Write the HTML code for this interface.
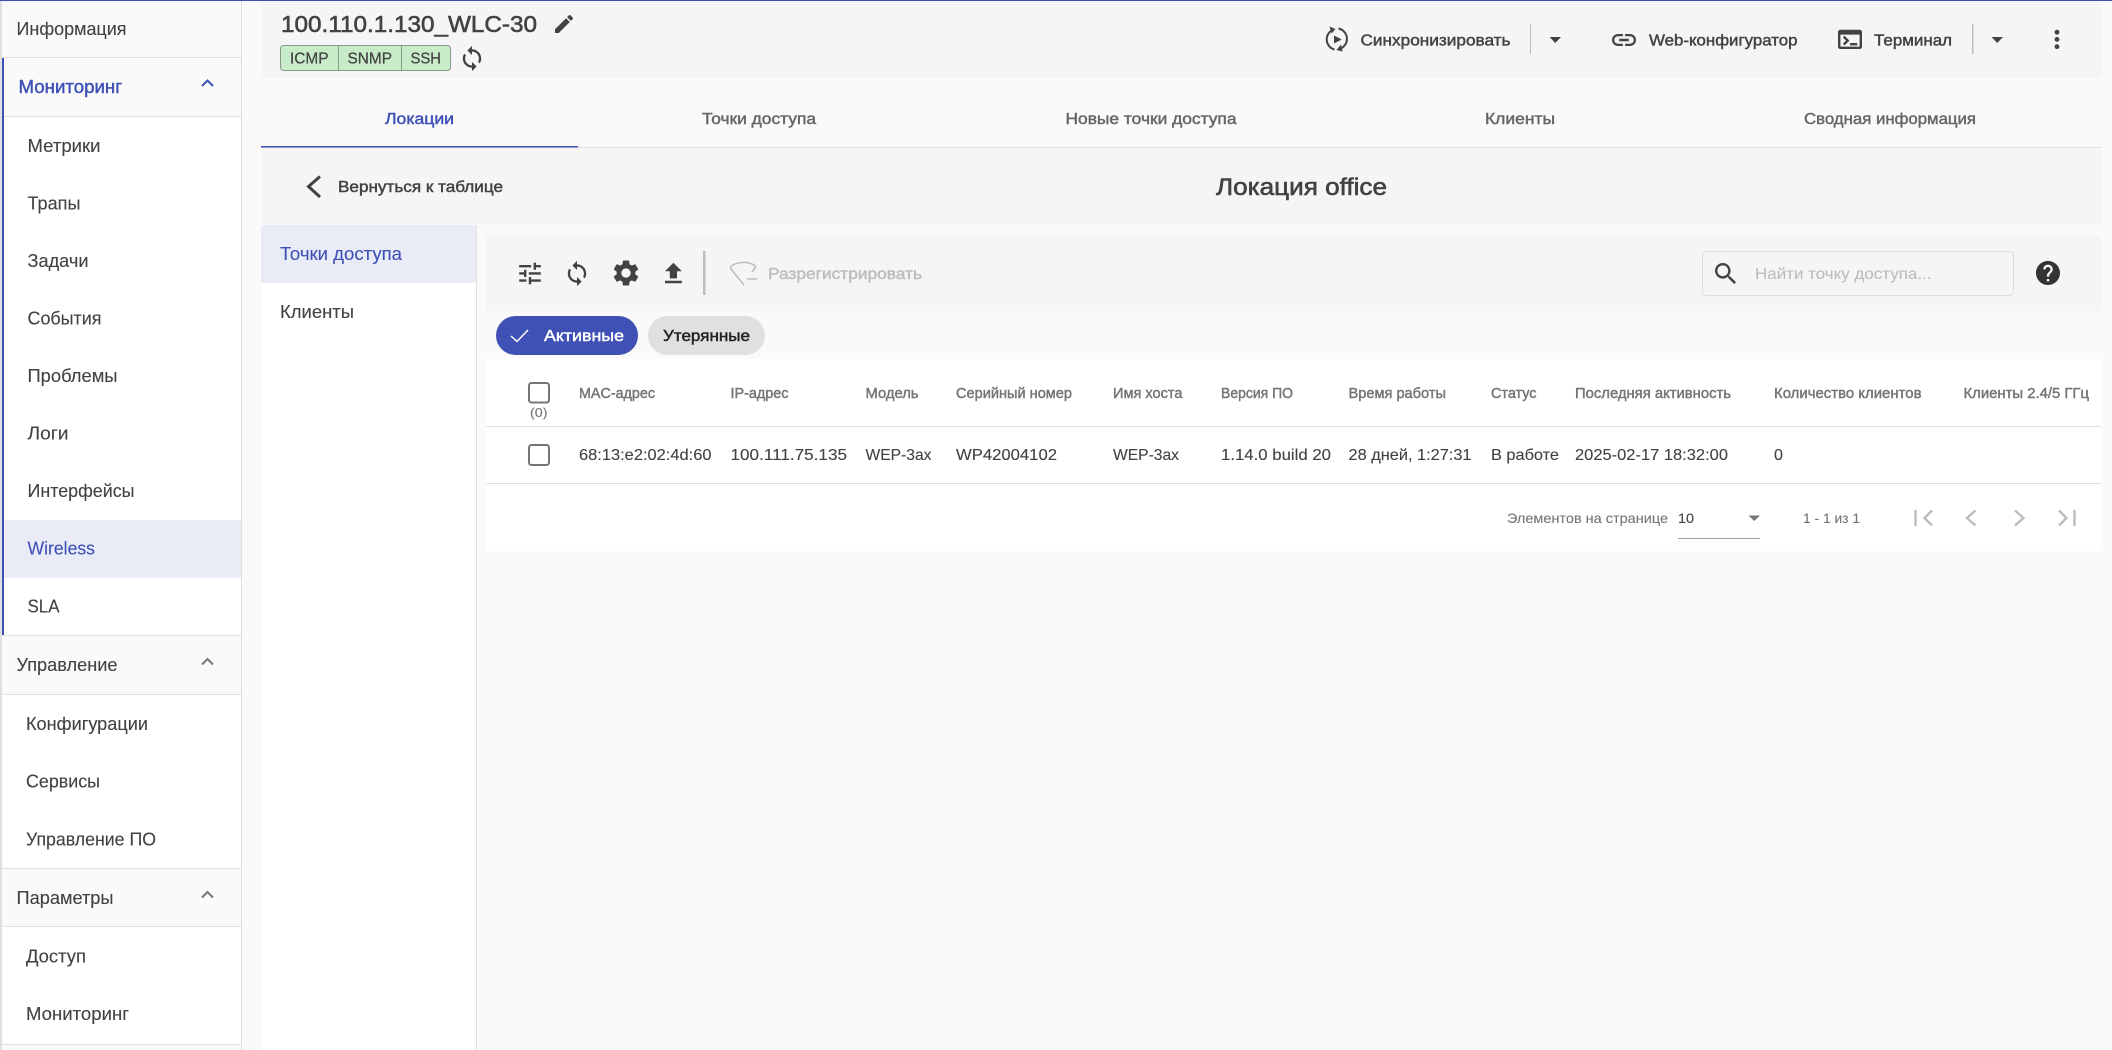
<!DOCTYPE html>
<html lang="ru"><head><meta charset="utf-8"><title>Локация office</title>
<style>
html,body{margin:0;padding:0;width:2112px;height:1050px;overflow:hidden;background:#fafafa}
svg{display:block}
text{font-family:"Liberation Sans",sans-serif;fill:currentColor;stroke:currentColor;stroke-width:.12;color:#424242;white-space:pre}
.m{stroke-width:.45}
.b{color:#3f51b5}.g{color:#757575}.l{color:#bdbdbd}.t{color:#666}
</style></head><body>
<svg xmlns="http://www.w3.org/2000/svg" width="2112" height="1050" viewBox="0 0 2112 1050">
<rect width="2112" height="1050" fill="#fafafa"/>
<rect width="2112" height="1" fill="#3f51b5"/>

<!-- sidebar -->
<rect x="0" y="1" width="2" height="1049" fill="#e0e0e0"/>
<rect x="2" y="1" width="239" height="1049" fill="#fff"/>
<rect x="241" y="1" width="1" height="1049" fill="#e0e0e0"/>
<rect x="2" y="1" width="239" height="56" fill="#fafafa"/>
<rect x="2" y="58" width="239" height="58" fill="#fafafa"/>
<rect x="2" y="636" width="239" height="58" fill="#fafafa"/>
<rect x="2" y="869" width="239" height="57" fill="#fafafa"/>
<rect x="2" y="1045" width="239" height="5" fill="#fafafa"/>
<rect x="4" y="520" width="237" height="58" fill="#e9ecf6"/>
<g fill="#e0e0e0">
<rect x="2" y="57" width="239" height="1"/><rect x="2" y="116" width="239" height="1"/>
<rect x="2" y="635" width="239" height="1"/><rect x="2" y="694" width="239" height="1"/>
<rect x="2" y="868" width="239" height="1"/><rect x="2" y="926" width="239" height="1"/>
<rect x="2" y="1044" width="239" height="1"/>
</g>
<rect x="2" y="58" width="2" height="577" fill="#3f51b5"/>
<text x="16.5" y="35" font-size="18" textLength="110" lengthAdjust="spacingAndGlyphs">Информация</text>
<text class="m b" x="18.5" y="93" font-size="18" textLength="103.5" lengthAdjust="spacingAndGlyphs">Мониторинг</text>
<polyline points="202,86 207.5,80.5 213,86" fill="none" stroke="#3f51b5" stroke-width="2"/>
<text x="27.5" y="152" font-size="18" textLength="73" lengthAdjust="spacingAndGlyphs">Метрики</text>
<text x="27.5" y="209.5" font-size="18" textLength="53" lengthAdjust="spacingAndGlyphs">Трапы</text>
<text x="27.5" y="267" font-size="18" textLength="61" lengthAdjust="spacingAndGlyphs">Задачи</text>
<text x="27.5" y="324.5" font-size="18" textLength="74" lengthAdjust="spacingAndGlyphs">События</text>
<text x="27.5" y="382" font-size="18" textLength="90" lengthAdjust="spacingAndGlyphs">Проблемы</text>
<text x="27.5" y="439.5" font-size="18" textLength="41" lengthAdjust="spacingAndGlyphs">Логи</text>
<text x="27.5" y="497" font-size="18" textLength="107" lengthAdjust="spacingAndGlyphs">Интерфейсы</text>
<text class="b" x="27.5" y="554.5" font-size="18" textLength="67.5" lengthAdjust="spacingAndGlyphs">Wireless</text>
<text x="27.5" y="612.5" font-size="18" textLength="32" lengthAdjust="spacingAndGlyphs">SLA</text>
<text x="16.5" y="671" font-size="18" textLength="101" lengthAdjust="spacingAndGlyphs">Управление</text>
<polyline points="202,664.5 207.5,659 213,664.5" fill="none" stroke="#757575" stroke-width="2"/>
<text x="26" y="730" font-size="18" textLength="122" lengthAdjust="spacingAndGlyphs">Конфигурации</text>
<text x="26" y="787.5" font-size="18" textLength="74" lengthAdjust="spacingAndGlyphs">Сервисы</text>
<text x="26" y="845.5" font-size="18" textLength="130" lengthAdjust="spacingAndGlyphs">Управление ПО</text>
<text x="16.5" y="904" font-size="18" textLength="97" lengthAdjust="spacingAndGlyphs">Параметры</text>
<polyline points="202,897.5 207.5,892 213,897.5" fill="none" stroke="#757575" stroke-width="2"/>
<text x="26" y="962.5" font-size="18" textLength="60" lengthAdjust="spacingAndGlyphs">Доступ</text>
<text x="26" y="1020" font-size="18" textLength="103" lengthAdjust="spacingAndGlyphs">Мониторинг</text>

<!-- header -->
<rect x="261" y="1" width="1840" height="77" fill="#f5f5f5"/>
<text class="m" style="stroke-width:.6" x="281" y="32" font-size="23.5" textLength="256" lengthAdjust="spacingAndGlyphs">100.110.1.130_WLC-30</text>
<path transform="translate(552 12)" fill="#424242" d="M3 17.25V21h3.75L17.81 9.94l-3.75-3.75L3 17.25zM20.71 7.04c.39-.39.39-1.02 0-1.41l-2.34-2.34c-.39-.39-1.02-.39-1.41 0l-1.83 1.83 3.75 3.75 1.83-1.83z"/>
<rect x="280.5" y="45.5" width="170" height="25" rx="3" fill="#c8ebc8" stroke="#8a9a8a"/>
<rect x="338" y="46" width="1" height="24" fill="#8a9a8a"/><rect x="401" y="46" width="1" height="24" fill="#8a9a8a"/>
<text style="stroke-width:.25" x="290" y="63.5" font-size="16" textLength="38.5" lengthAdjust="spacingAndGlyphs">ICMP</text>
<text style="stroke-width:.25" x="347.5" y="63.5" font-size="16" textLength="44.5" lengthAdjust="spacingAndGlyphs">SNMP</text>
<text style="stroke-width:.25" x="410.5" y="63.5" font-size="16" textLength="30.5" lengthAdjust="spacingAndGlyphs">SSH</text>
<path transform="translate(458.2 44.7) scale(1.15)" fill="#424242" d="M12 4V1L8 5l4 4V6c3.31 0 6 2.69 6 6 0 1.01-.25 1.97-.7 2.8l1.46 1.46C19.54 15.03 20 13.57 20 12c0-4.42-3.58-8-8-8zm0 14c-3.31 0-6-2.69-6-6 0-1.01.25-1.97.7-2.8L5.24 7.74C4.46 8.97 4 10.43 4 12c0 4.42 3.58 8 8 8v3l4-4-4-4v3z"/>

<!-- sync play -->
<path d="M1333.5 29.5A10.6 10.6 0 0 0 1334.5 49.6M1338.5 28.5A10.6 10.6 0 0 1 1339.5 49" fill="none" stroke="#424242" stroke-width="2"/>
<path d="M1329.5 26.5L1335.5 29L1331.5 33.5ZM1342.5 51.5L1336.5 50L1341 44.5Z" fill="#424242"/>
<path d="M1334 35.5V43.5L1341.7 39.5Z" fill="#424242"/>
<text class="m" x="1360.5" y="45.5" font-size="16" textLength="150" lengthAdjust="spacingAndGlyphs">Синхронизировать</text>
<rect x="1530" y="24" width="1" height="30" fill="#bdbdbd"/>
<path d="M1549.5 37H1561L1555.25 43Z" fill="#424242"/>
<path transform="translate(1609.6 25.6) scale(1.2)" fill="#424242" d="M3.9 12c0-1.71 1.39-3.1 3.1-3.1h4V7H7c-2.76 0-5 2.24-5 5s2.24 5 5 5h4v-1.9H7c-1.71 0-3.1-1.39-3.1-3.1zM8 13h8v-2H8v2zm9-6h-4v1.9h4c1.71 0 3.1 1.39 3.1 3.1s-1.39 3.1-3.1 3.1h-4V17h4c2.76 0 5-2.24 5-5s-2.24-5-5-5z"/>
<text class="m" x="1649" y="45.5" font-size="16" textLength="148.5" lengthAdjust="spacingAndGlyphs">Web-конфигуратор</text>
<path transform="translate(1835.6 25) scale(1.2)" fill="#424242" d="M20 4H4c-1.11 0-2 .9-2 2v12c0 1.1.89 2 2 2h16c1.1 0 2-.9 2-2V6c0-1.1-.89-2-2-2zm0 14H4V8h16v10zm-2-1h-6v-2h6v2zM7.5 17l-1.41-1.41L8.67 13l-2.59-2.59L7.5 9l4 4-4 4z"/>
<text class="m" x="1874" y="45.5" font-size="16" textLength="78" lengthAdjust="spacingAndGlyphs">Терминал</text>
<rect x="1972" y="24" width="1.5" height="30" fill="#bdbdbd"/>
<path d="M1991.5 37H2003L1997.25 43Z" fill="#424242"/>
<path transform="translate(2042.6 25) scale(1.2)" fill="#424242" d="M12 8c1.1 0 2-.9 2-2s-.9-2-2-2-2 .9-2 2 .9 2 2 2zm0 2c-1.1 0-2 .9-2 2s.9 2 2 2 2-.9 2-2-.9-2-2-2zm0 6c-1.1 0-2 .9-2 2s.9 2 2 2 2-.9 2-2-.9-2-2-2z"/>

<!-- tabs -->
<rect x="261" y="147" width="1840" height="1" fill="#e0e0e0"/>
<rect x="261" y="146" width="317" height="1.5" fill="#3f51b5"/>
<text class="m b" x="385" y="124" font-size="16" textLength="69" lengthAdjust="spacingAndGlyphs">Локации</text>
<text class="m t" x="702" y="124" font-size="16" textLength="114" lengthAdjust="spacingAndGlyphs">Точки доступа</text>
<text class="m t" x="1065.5" y="124" font-size="16" textLength="171" lengthAdjust="spacingAndGlyphs">Новые точки доступа</text>
<text class="m t" x="1485" y="124" font-size="16" textLength="70" lengthAdjust="spacingAndGlyphs">Клиенты</text>
<text class="m t" x="1804" y="124" font-size="16" textLength="172" lengthAdjust="spacingAndGlyphs">Сводная информация</text>

<!-- sub header -->
<rect x="261" y="148" width="1840" height="76" fill="#f5f5f5"/>
<polyline points="320,176.5 308.5,186.5 320,197" fill="none" stroke="#424242" stroke-width="3"/>
<text class="m" x="338" y="192" font-size="16" textLength="165" lengthAdjust="spacingAndGlyphs">Вернуться к таблице</text>
<text class="m" style="stroke-width:.6" x="1216" y="195" font-size="24" textLength="171" lengthAdjust="spacingAndGlyphs">Локация office</text>

<!-- left tabs -->
<rect x="261" y="225" width="215" height="825" fill="#fff"/>
<rect x="476" y="225" width="1" height="825" fill="#e0e0e0"/>
<rect x="261" y="225" width="215" height="58" fill="#e9ecf6"/>
<text class="b" x="280" y="260" font-size="18" textLength="122" lengthAdjust="spacingAndGlyphs">Точки доступа</text>
<text x="280" y="318" font-size="18" textLength="74" lengthAdjust="spacingAndGlyphs">Клиенты</text>

<!-- toolbar -->
<rect x="486" y="235" width="1615" height="76" fill="#f5f5f5"/>
<path transform="translate(515.6 259) scale(1.2)" fill="#424242" d="M3 17v2h6v-2H3zM3 5v2h10V5H3zm10 16v-2h8v-2h-8v-2h-2v6h2zM7 9v2H3v2h4v2h2V9H7zm14 4v-2H11v2h10zm-6-4h2V7h4V5h-4V3h-2v6z"/>
<path transform="translate(563.2 259.7) scale(1.15)" fill="#424242" d="M12 4V1L8 5l4 4V6c3.31 0 6 2.69 6 6 0 1.01-.25 1.97-.7 2.8l1.46 1.46C19.54 15.03 20 13.57 20 12c0-4.42-3.58-8-8-8zm0 14c-3.31 0-6-2.69-6-6 0-1.01.25-1.97.7-2.8L5.24 7.74C4.46 8.97 4 10.43 4 12c0 4.42 3.58 8 8 8v3l4-4-4-4v3z"/>
<path transform="translate(610.4 257.4) scale(1.3)" fill="#424242" d="M19.14 12.94c.04-.3.06-.61.06-.94 0-.32-.02-.64-.07-.94l2.03-1.58c.18-.14.23-.41.12-.61l-1.92-3.32c-.12-.22-.37-.29-.59-.22l-2.39.96c-.5-.38-1.03-.7-1.62-.94l-.36-2.54c-.04-.24-.24-.41-.48-.41h-3.84c-.24 0-.43.17-.47.41l-.36 2.54c-.59.24-1.13.57-1.62.94l-2.39-.96c-.22-.08-.47 0-.59.22L2.74 8.87c-.12.21-.08.47.12.61l2.03 1.58c-.05.3-.09.63-.09.94s.02.64.07.94l-2.03 1.58c-.18.14-.23.41-.12.61l1.92 3.32c.12.22.37.29.59.22l2.39-.96c.5.38 1.03.7 1.62.94l.36 2.54c.05.24.24.41.48.41h3.84c.24 0 .44-.17.47-.41l.36-2.54c.59-.24 1.13-.56 1.62-.94l2.39.96c.22.08.47 0 .59-.22l1.92-3.32c.12-.22.07-.47-.12-.61l-2.01-1.58zM12 15.6c-1.98 0-3.6-1.62-3.6-3.6s1.62-3.6 3.6-3.6 3.6 1.62 3.6 3.6-1.62 3.6-3.6 3.6z"/>
<path transform="translate(659 259.2) scale(1.2)" fill="#424242" d="M9 16h6v-6h4l-7-7-7 7h4zm-4 2h14v2H5z"/>
<rect x="703" y="251" width="2.5" height="44" fill="#bdbdbd"/>
<path d="M744 285L731 269Q729.5 266.5 733 265Q743 260 753 264.5Q756.5 266 755 268L752 272M747 279H757" fill="none" stroke="#bdbdbd" stroke-width="1.6"/>
<text class="m l" x="768" y="279" font-size="16" textLength="154" lengthAdjust="spacingAndGlyphs">Разрегистрировать</text>
<rect x="1702.5" y="251.5" width="311" height="44" rx="4" fill="#f5f5f5" stroke="#dcdcdc"/>
<path transform="translate(1711.4 259.4) scale(1.2)" fill="#424242" d="M15.5 14h-.79l-.28-.27C15.41 12.59 16 11.11 16 9.5 16 5.91 13.09 3 9.5 3S3 5.91 3 9.5 5.91 16 9.5 16c1.61 0 3.09-.59 4.23-1.57l.27.28v.79l5 4.99L20.49 19l-4.99-5zm-6 0C7.01 14 5 11.99 5 9.5S7.01 5 9.5 5 14 7.01 14 9.5 11.99 14 9.5 14z"/>
<text class="l" x="1755" y="279" font-size="16" textLength="176.5" lengthAdjust="spacingAndGlyphs">Найти точку доступа...</text>
<path transform="translate(2033.6 258.6) scale(1.2)" fill="#333" d="M12 2C6.48 2 2 6.48 2 12s4.48 10 10 10 10-4.48 10-10S17.52 2 12 2zm1 17h-2v-2h2v2zm2.07-7.75l-.9.92C13.45 12.9 13 13.5 13 15h-2v-.5c0-1.1.45-2.1 1.17-2.83l1.24-1.26c.37-.36.59-.86.59-1.41 0-1.1-.9-2-2-2s-2 .9-2 2H8c0-2.21 1.79-4 4-4s4 1.79 4 4c0 .88-.36 1.68-.93 2.25z"/>

<!-- chips -->
<rect x="496" y="316" width="142" height="39" rx="19.5" fill="#3f51b5"/>
<polyline points="511,336 517,341.5 528,330" fill="none" stroke="#fff" stroke-width="1.5"/>
<text class="m" style="color:#fff" x="544" y="341" font-size="16" textLength="80" lengthAdjust="spacingAndGlyphs">Активные</text>
<rect x="648" y="316" width="117" height="39" rx="19.5" fill="#e0e0e0"/>
<text class="m" style="color:#212121" x="663" y="341" font-size="16" textLength="87" lengthAdjust="spacingAndGlyphs">Утерянные</text>

<!-- table -->
<rect x="486" y="359" width="1615" height="192" fill="#fff"/>
<rect x="486" y="426" width="1615" height="1" fill="#e0e0e0"/>
<rect x="486" y="483" width="1615" height="1" fill="#e0e0e0"/>
<rect x="529" y="383" width="20" height="19.5" rx="2.5" fill="#fff" stroke="#757575" stroke-width="2"/>
<rect x="529" y="445" width="20" height="20" rx="2.5" fill="#fff" stroke="#757575" stroke-width="2"/>
<text class="g" x="530" y="417" font-size="13" textLength="17.5" lengthAdjust="spacingAndGlyphs">(0)</text>
<g font-size="14.5">
<text class="m g" x="579" y="398" textLength="76" lengthAdjust="spacingAndGlyphs">MAC-адрес</text>
<text class="m g" x="730.5" y="398" textLength="58" lengthAdjust="spacingAndGlyphs">IP-адрес</text>
<text class="m g" x="865.5" y="398" textLength="53" lengthAdjust="spacingAndGlyphs">Модель</text>
<text class="m g" x="956" y="398" textLength="116" lengthAdjust="spacingAndGlyphs">Серийный номер</text>
<text class="m g" x="1113" y="398" textLength="69.5" lengthAdjust="spacingAndGlyphs">Имя хоста</text>
<text class="m g" x="1221" y="398" textLength="72" lengthAdjust="spacingAndGlyphs">Версия ПО</text>
<text class="m g" x="1348.5" y="398" textLength="97.5" lengthAdjust="spacingAndGlyphs">Время работы</text>
<text class="m g" x="1491" y="398" textLength="45.5" lengthAdjust="spacingAndGlyphs">Статус</text>
<text class="m g" x="1575" y="398" textLength="156" lengthAdjust="spacingAndGlyphs">Последняя активность</text>
<text class="m g" x="1774" y="398" textLength="147.5" lengthAdjust="spacingAndGlyphs">Количество клиентов</text>
<text class="m g" x="1963.5" y="398" textLength="125.5" lengthAdjust="spacingAndGlyphs">Клиенты 2.4/5 ГГц</text>
</g>
<g font-size="16">
<text x="579" y="460" textLength="132.5" lengthAdjust="spacingAndGlyphs">68:13:e2:02:4d:60</text>
<text x="730.5" y="460" textLength="116.5" lengthAdjust="spacingAndGlyphs">100.111.75.135</text>
<text x="865.5" y="460" textLength="66" lengthAdjust="spacingAndGlyphs">WEP-3ax</text>
<text x="956" y="460" textLength="101" lengthAdjust="spacingAndGlyphs">WP42004102</text>
<text x="1113" y="460" textLength="66" lengthAdjust="spacingAndGlyphs">WEP-3ax</text>
<text x="1221" y="460" textLength="110" lengthAdjust="spacingAndGlyphs">1.14.0 build 20</text>
<text x="1348.5" y="460" textLength="123" lengthAdjust="spacingAndGlyphs">28 дней, 1:27:31</text>
<text x="1491" y="460" textLength="68" lengthAdjust="spacingAndGlyphs">В работе</text>
<text x="1575" y="460" textLength="153" lengthAdjust="spacingAndGlyphs">2025-02-17 18:32:00</text>
<text x="1774" y="460" textLength="9" lengthAdjust="spacingAndGlyphs">0</text>
</g>

<!-- paginator -->
<text class="g" x="1507" y="523" font-size="14" textLength="161" lengthAdjust="spacingAndGlyphs">Элементов на странице</text>
<text x="1678" y="523" font-size="14" textLength="16" lengthAdjust="spacingAndGlyphs">10</text>
<path d="M1748.5 515.5H1760L1754.25 521Z" fill="#757575"/>
<rect x="1678" y="538" width="82" height="1" fill="#9e9e9e"/>
<text class="g" x="1803" y="523" font-size="14" textLength="57" lengthAdjust="spacingAndGlyphs">1 - 1 из 1</text>
<g fill="none" stroke="#bdbdbd" stroke-width="2.4">
<path d="M1915.5 510V526M1932 510.5L1924.5 518L1932 525.5"/>
<path d="M1975.5 510.5L1967 518L1975.5 525.5"/>
<path d="M2015 510.5L2023.5 518L2015 525.5"/>
<path d="M2059 510.5L2066.5 518L2059 525.5M2074.5 510V526"/>
</g>
</svg>
</body></html>
